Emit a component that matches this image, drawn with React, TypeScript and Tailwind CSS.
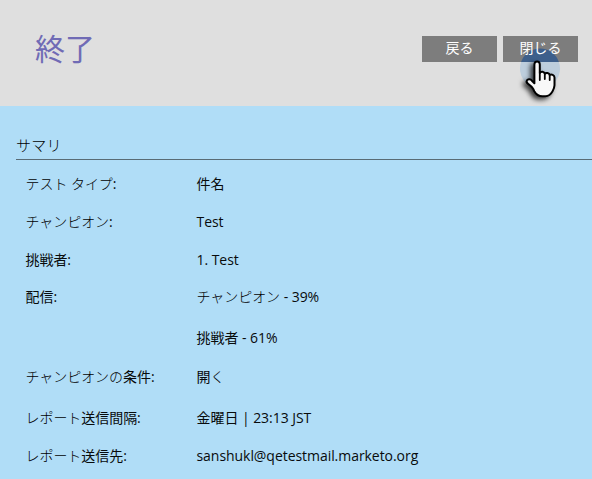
const rows = [
  { label: 'テスト タイプ:', value: '件名', height: 'h-[38px]' },
  { label: 'チャンピオン:', value: 'Test', height: 'h-[38px]' },
  { label: '挑戦者:', value: '1. Test', height: 'h-[37px]' },
  { label: '配信:', value: 'チャンピオン - 39%', height: 'h-[41px]' },
  { label: '', value: '挑戦者 - 61%', height: 'h-[39px]' },
  { label: 'チャンピオンの条件:', value: '開く', height: 'h-[41px]' },
  { label: 'レポート送信間隔:', value: '金曜日 | 23:13 JST', height: 'h-[38px]' },
  { label: 'レポート送信先:', value: 'sanshukl@qetestmail.marketo.org', height: 'h-[38px]' },
];

// Kana runs are set in a lighter weight than kanji and Latin runs.
function MixedText({ text }: { text: string }) {
  return (
    <>
      {text.split(/([\u3040-\u30ff]+)/).map((run, i) =>
        i % 2 === 1 ? <span key={i} className="font-light text-black">{run}</span> : <span key={i}>{run}</span>
      )}
    </>
  );
}

function ClickHalo() {
  return (
    <svg className="absolute left-[514px] top-[40px]" width="52" height="66" viewBox="0 0 52 66">
      <path d="M7.1 22a20 20 0 0 1 37.8 0z" fill="#3d5f8b" />
      <path d="M7.1 22a20 20 0 1 0 37.8 0z" fill="#bdcedd" />
    </svg>
  );
}

function HandCursor() {
  return (
    <svg className="pointer-events-none absolute left-[514px] top-[40px] z-20" width="52" height="66" viewBox="0 0 52 66">
      <defs>
        <filter id="shadow" x="-40%" y="-40%" width="180%" height="180%">
          <feDropShadow dx="-3" dy="2.5" stdDeviation="2.4" floodColor="#000" floodOpacity="0.75" />
        </filter>
      </defs>
      <g transform="translate(.1 -.2)">
        <path
          d="M20.3 43.5V24.7c0-4 5.4-4 5.4 0v8.6c1.1-2.2 4.5-1.8 5 .7 1.2-1.5 4.5-1 4.9 1.2 1.6-1.1 4.8.1 4.8 2.6v7.7c0 2.2-1 4.2-2 6.1-1.5 2.8-4 4.8-7.2 4.8h-2.9c-3.5 0-6.5-2-8.1-5l-1.2-2.4c-1.2-2.1-2.7-3.3-4.7-4.7-1.5-1-2.3-2.4-1.4-3.8 1.1-1.7 3.6-1.2 4.9.4z"
          fill="#f8f8f8" stroke="#050505" strokeWidth="2" strokeLinejoin="round" filter="url(#shadow)"
        />
        <path d="M25.7 33v7.2M30.7 34v5.2M35.6 35v5.2" fill="none" stroke="#050505" strokeWidth="1.8" strokeLinecap="round" />
      </g>
    </svg>
  );
}

export default function App() {
  return (
    <div className="relative h-[479px] w-[592px] overflow-hidden bg-[#b0ddf7] font-['Open_Sans','Noto_Sans_CJK_JP',sans-serif] text-[14px] text-[#080b0c]">
      <header className="flex h-[106px] items-start justify-between bg-[#dfdfdf] pl-[35px] pr-[14px]">
        <h1 className="mt-[27px] text-[30px] font-normal leading-[44px] text-[#706bb5]">終了</h1>
        <div className="mt-9 flex gap-[6px]">
          <button className="h-[26px] w-[75px] bg-[#7d7d7d] pb-[3px] leading-[23px] text-white">戻る</button>
          <button className="h-[26px] w-[75px] bg-[#7d7d7d] pb-[3px] leading-[23px] text-white">
            <span className="relative z-10">閉じる</span>
          </button>
        </div>
      </header>
      <main className="pl-4 pt-[29px]">
        <h2 className="h-[25px] border-b border-[#596b75] text-[15px] font-light leading-[20px] tracking-[0.2px] text-black">サマリ</h2>
        <dl className="pt-[5px] tracking-[-0.05px]">
          {rows.map((row) => (
            <div key={row.value} className={`flex ${row.height} pl-[9.5px] leading-[38px] whitespace-pre`}>
              <dt className="w-[171px]"><MixedText text={row.label} /></dt>
              <dd><MixedText text={row.value} /></dd>
            </div>
          ))}
        </dl>
      </main>
      <ClickHalo />
      <HandCursor />
    </div>
  );
}
